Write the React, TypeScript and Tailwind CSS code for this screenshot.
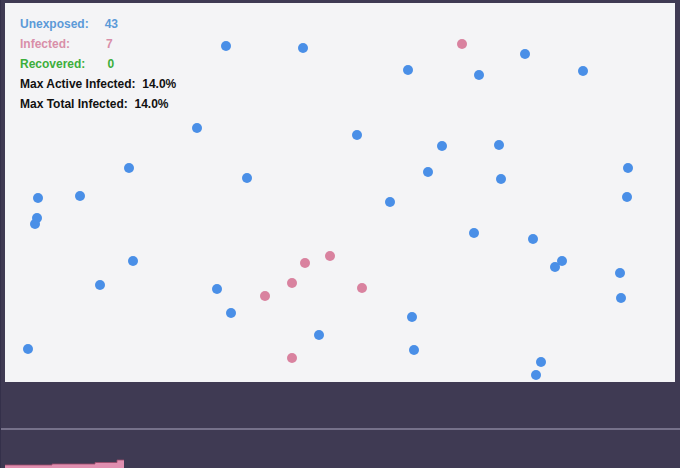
const blueDots: [number, number][] = [
  [226, 46], [303, 48], [408, 70], [479, 75], [525, 54], [583, 71],
  [197, 128], [357, 135], [442, 146], [499, 145], [628, 168], [129, 168],
  [247, 178], [428, 172], [501, 179], [38, 198], [80, 196], [627, 197],
  [390, 202], [37, 218], [35, 224], [474, 233], [533, 239], [133, 261],
  [555, 267], [562, 261], [620, 273], [100, 285], [217, 289], [621, 298],
  [231, 313], [412, 317], [319, 335], [28, 349], [414, 350], [541, 362],
  [536, 375],
]

const pinkDots: [number, number][] = [
  [462, 44], [305, 263], [330, 256], [265, 296], [292, 283], [362, 288], [292, 358],
]

function Stat({ label, value, color, valueX }: { label: string; value: string; color: string; valueX: string }) {
  return (
    <div className={`flex h-5 items-center ${color}`}>
      <span>{label}</span>
      <span className={valueX}>{value}</span>
    </div>
  )
}

export default function App() {
  return (
    <div className="h-[468px] w-[680px] overflow-hidden border-l border-[#34304a] bg-[#3f3a53] font-['Liberation_Sans',Arial,sans-serif]">
      <div className="pl-1 pt-[3px]">
        <div className="relative h-[379px] w-[670px] bg-[#f4f4f6]">
          <svg className="absolute inset-0" width="670" height="379">
            {blueDots.map(([x, y], i) => (
              <circle key={`b${i}`} cx={x - 5} cy={y - 3} r="5" fill="#4a8fe7" />
            ))}
            {pinkDots.map(([x, y], i) => (
              <circle key={`p${i}`} cx={x - 5} cy={y - 3} r="5" fill="#d9829f" />
            ))}
          </svg>
          <div className="relative flex flex-col pl-[15px] pt-[11px] text-[12px] font-bold">
            <Stat label="Unexposed:" value="43" color="text-[#5b9ad8]" valueX="ml-[16px]" />
            <Stat label="Infected:" value="7" color="text-[#d98fa9]" valueX="ml-[36px]" />
            <Stat label="Recovered:" value="0" color="text-[#3cae3c]" valueX="ml-[22px]" />
            <div className="flex h-5 items-center text-[#111]">Max Active Infected:&nbsp; 14.0%</div>
            <div className="flex h-5 items-center text-[#111]">Max Total Infected:&nbsp; 14.0%</div>
          </div>
        </div>
      </div>
      <div className="mt-[46px] h-[2px] w-full bg-[#76718a]" />
      <div className="pl-1 pt-[29px]">
        <svg width="130" height="9">
          <path d="M0 9 V6 H47 V5 H90 V3.5 H112 V1 H119 V9 Z" fill="#e08fb0" />
          <path d="M0 6 H47 V5 H90 V3.5 H112 V1 H119" fill="none" stroke="#9c4a6a" strokeWidth="0.8" />
        </svg>
      </div>
    </div>
  )
}
